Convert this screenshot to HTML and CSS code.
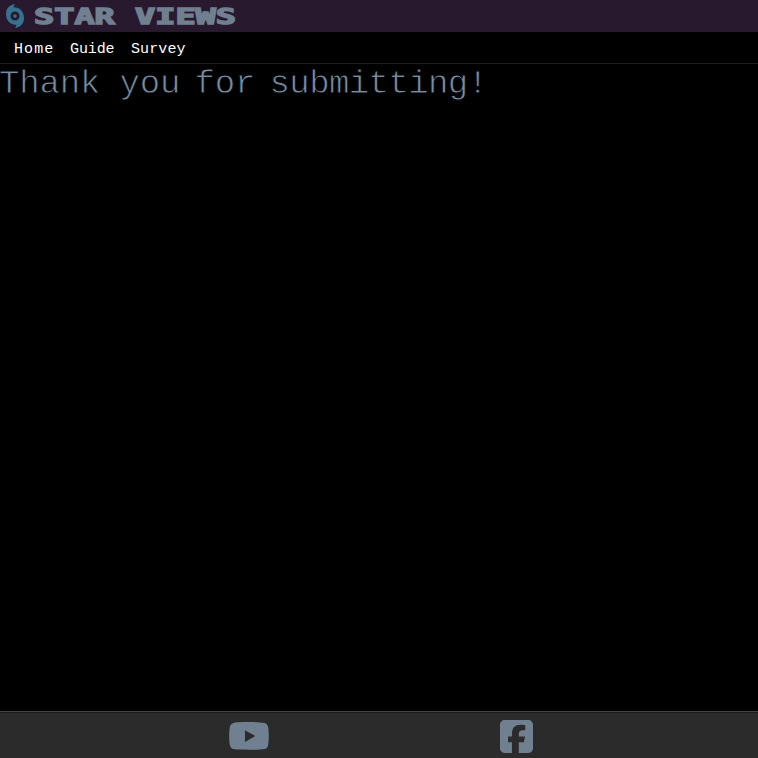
FILE: index.html
```
<!DOCTYPE html>
<html lang="en">
<head>
<meta charset="utf-8">
<title>Star Views</title>
<link rel="stylesheet" href="styles.css">
</head>
<body>
<header class="banner">
  <svg class="logo" viewBox="0 0 384 512" aria-hidden="true"><path d="M0 209C0 106 62 20 192 0c-17 19-28 44-28 67 120 0 220 82 220 236 0 103-62 189-192 209 17-19 28-44 28-67C100 445 0 363 0 209zm192-49a96 96 0 1 0 0 192 96 96 0 1 0 0-192z"/><circle cx="192" cy="256" r="38"/></svg>
  <span class="brand">STAR VIEWS</span>
</header>
<nav class="menu">
  <a class="link home">Home</a>
  <a class="link guide">Guide</a>
  <a class="link survey">Survey</a>
</nav>
<main class="content">
  <h1 class="message"><span class="first">Thank</span> you for <span class="last">submitting!</span></h1>
</main>
<footer class="social">
  <svg class="youtube" viewBox="14 63 548 386" aria-label="YouTube"><path d="M549.7 124.1c-6.3-23.7-24.8-42.3-48.3-48.6C458.8 64 288 64 288 64S117.200 64 74.600 75.500c-23.500 6.300-42 24.900-48.300 48.600-11.400 42.900-11.400 132.300-11.400 132.300s0 89.400 11.400 132.300c6.300 23.700 24.800 41.500 48.300 47.800C117.200 448 288 448 288 448s170.800 0 213.400-11.500c23.500-6.300 42-24.200 48.300-47.800 11.400-42.900 11.400-132.300 11.400-132.300s0-89.400-11.400-132.300zM232.200 337.600V175.200l142.700 81.200z"/></svg>
  <svg class="facebook" viewBox="0 32 448 448" aria-label="Facebook"><path d="M64 32C28.700 32 0 60.700 0 96v320c0 35.300 28.700 64 64 64h98.200V334.200h-52.800V256h52.800v-33.700c0-87.100 39.400-127.500 125-127.500 16.200 0 44.200 3.200 55.700 6.400V172c-6-.6-16.500-1-29.600-1-42 0-58.200 15.900-58.200 57.200V256h83.600l-14.400 78.200h-69.300V480H384c35.300 0 64-28.700 64-64V96c0-35.300-28.700-64-64-64z"/></svg>
</footer>
</body>
</html>
```
FILE: styles.css
```
* {
  box-sizing: border-box;
}

body {
  display: flex;
  flex-direction: column;
  height: 100vh;
  margin: 0;
  overflow: hidden;
  background: #000;
  color: #708090;
  font-family: "Liberation Mono", monospace;
}

.banner {
  display: flex;
  align-items: center;
  height: 32px;
  padding-left: 6px;
  background: #28192f;
}

.logo {
  flex: none;
  width: 18px;
  height: 24px;
  margin-right: 10px;
  fill: #36718f;
}

.brand {
  padding-top: 2px;
  font: bold 22px/32px "DejaVu Sans Mono", monospace;
  white-space: pre;
  transform: scaleX(1.525);
  transform-origin: left;
  -webkit-text-stroke: 1.5px #708090;
}

.menu {
  display: flex;
  gap: 16px;
  height: 32px;
  padding-left: 14px;
  border-bottom: 1px solid #1c1c1c;
}

.link {
  color: #fff;
  font-size: 15px;
  line-height: 35px;
}

.home {
  width: 40px;
  letter-spacing: 1.1px;
}

.guide {
  width: 44px;
  letter-spacing: -0.1px;
}

.survey {
  padding-left: 1px;
  letter-spacing: 0.1px;
}

.content {
  flex: 1;
}

.message {
  margin: 0;
  color: #7a8da0;
  font-size: 34px;
  font-weight: normal;
  line-height: 40px;
  letter-spacing: -0.15px;
  word-spacing: -6px;
  text-indent: -1px;
  white-space: nowrap;
  -webkit-text-stroke: 0.8px #000;
}

.first {
  margin-right: 5px;
}

.last {
  letter-spacing: -0.6px;
}

.social {
  display: flex;
  align-items: center;
  height: 47px;
  padding: 2px 0 0 229px;
  border-top: 1px solid #444;
  background: #2b2b2b;
  box-shadow: inset 0 1px #1c1c1c;
  fill: #708090;
}

.youtube {
  width: 40px;
  height: 28px;
  margin: 0 231px 1px 0;
}

.facebook {
  width: 33px;
  height: 33px;
}
```
